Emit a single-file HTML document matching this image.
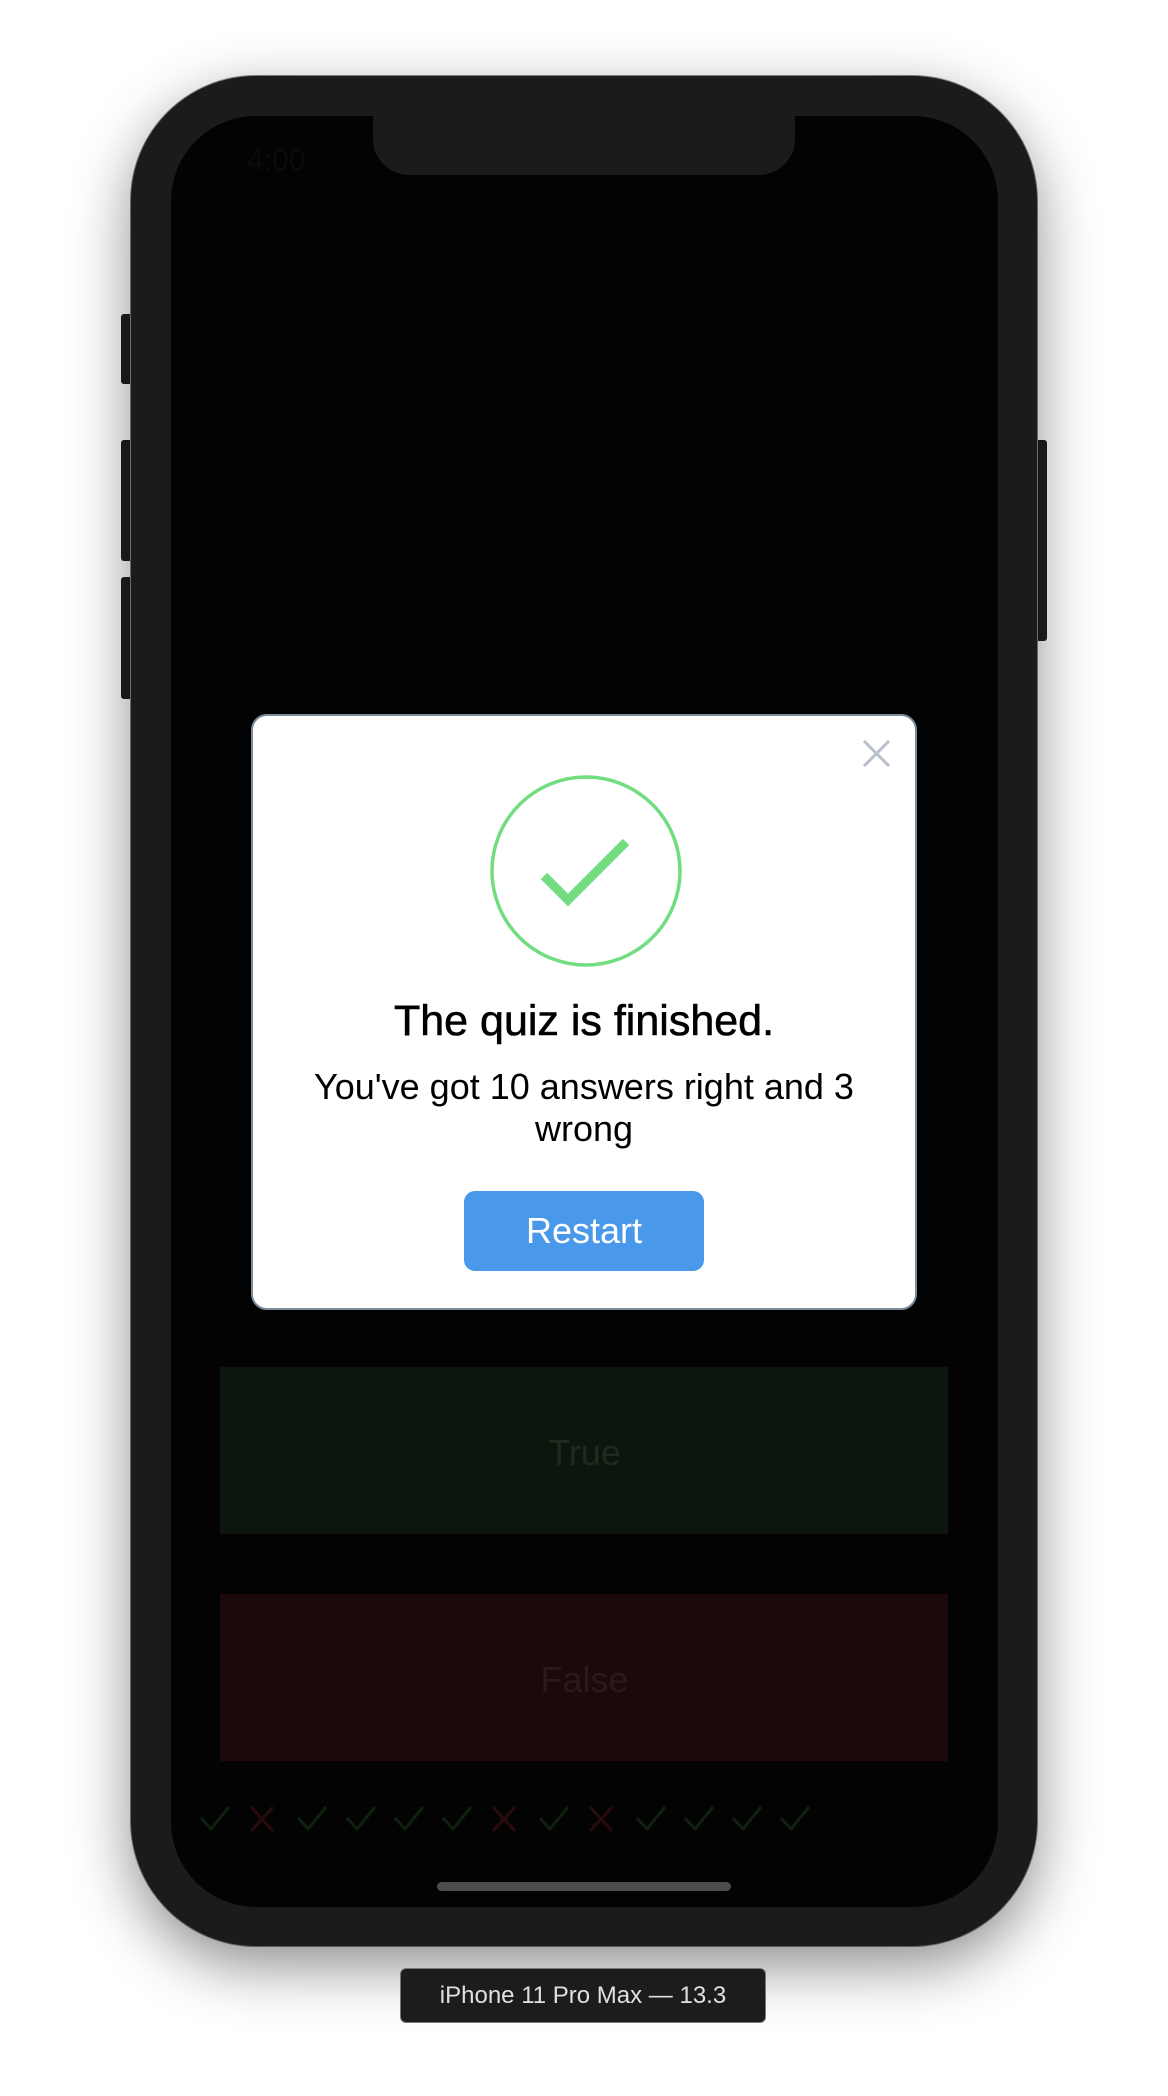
<!DOCTYPE html>
<html><head><meta charset="utf-8"><style>
html,body{margin:0;padding:0;background:#fff;}
body{width:1168px;height:2096px;position:relative;overflow:hidden;font-family:"Liberation Sans",sans-serif;}
.abs{position:absolute;}
.phone{left:131px;top:76px;width:906px;height:1870px;border-radius:125px;background:#1b1b1b;box-shadow:0 20px 60px rgba(0,0,0,0.45),0 0 0 1px #8a8a8a;}
.screen{left:171px;top:116px;width:827px;height:1791px;border-radius:85px;background:#030303;overflow:hidden;}
.notch{left:202px;top:0;width:422px;height:59px;background:#1b1b1b;border-radius:0 0 36px 36px;}
.btn{background:#1f1f1f;border-radius:3px;}
.modal{left:251px;top:714px;width:666px;height:596px;background:#fff;border:2px solid #7d8c99;border-radius:16px;box-sizing:border-box;}
.t{position:absolute;left:0;right:0;text-align:center;}
</style></head><body>
<div class="abs btn" style="left:121px;top:314px;width:12px;height:70px"></div>
<div class="abs btn" style="left:121px;top:440px;width:12px;height:121px"></div>
<div class="abs btn" style="left:121px;top:577px;width:12px;height:122px"></div>
<div class="abs btn" style="left:1035px;top:440px;width:12px;height:201px"></div>
<div class="abs phone"></div>
<div class="abs screen">
  <div class="abs notch"></div>
  <div class="abs" style="left:76px;top:28px;color:#0b0b0b;font-size:30px;">4:00</div>
  <div class="abs" style="left:49px;top:1251px;width:728px;height:167px;background:#0d160d;"></div>
  <div class="t" style="top:1316px;font-size:36px;color:#1e2b1e;">True</div>
  <div class="abs" style="left:49px;top:1478px;width:728px;height:167px;background:#1d0909;"></div>
  <div class="t" style="top:1543px;font-size:36px;color:#2b1a1a;">False</div>
  <svg class="abs" style="left:0;top:1673px" width="827" height="60">
    <g fill="none" stroke-width="3">
      <path stroke="#0f200f" d="M30 29 L40 40 L58 18"/>
      <path stroke="#2a0b0b" d="M80 18 L102 42 M102 18 L80 42"/>
      <path stroke="#0f200f" d="M127 29 L137 40 L155 18"/>
      <path stroke="#0f200f" d="M176 29 L186 40 L204 18"/>
      <path stroke="#0f200f" d="M224 29 L234 40 L252 18"/>
      <path stroke="#0f200f" d="M272 29 L282 40 L300 18"/>
      <path stroke="#2a0b0b" d="M322 18 L344 42 M344 18 L322 42"/>
      <path stroke="#0f200f" d="M369 29 L379 40 L397 18"/>
      <path stroke="#2a0b0b" d="M419 18 L441 42 M441 18 L419 42"/>
      <path stroke="#0f200f" d="M466 29 L476 40 L494 18"/>
      <path stroke="#0f200f" d="M514 29 L524 40 L542 18"/>
      <path stroke="#0f200f" d="M562 29 L572 40 L590 18"/>
      <path stroke="#0f200f" d="M610 29 L620 40 L638 18"/>
    </g>
  </svg>
  <div class="abs" style="left:266px;top:1766px;width:294px;height:9px;border-radius:5px;background:#4d4d4d;"></div>
</div>
<div class="abs modal">
  <svg class="abs" style="left:0;top:0" width="664" height="592">
    <path d="M611 25 L636 50 M636 25 L611 50" stroke="#b7c0c9" stroke-width="3" fill="none"/>
    <circle cx="333" cy="155" r="94" fill="none" stroke="#72dc80" stroke-width="3.5"/>
    <path d="M291 160 L315 184 L373 126" fill="none" stroke="#72dc80" stroke-width="9"/>
  </svg>
  <div class="t" style="top:281px;font-size:43px;color:#000;-webkit-text-stroke:0.6px #000;">The quiz is finished.</div>
  <div class="t" style="top:350px;font-size:36px;line-height:42px;color:#000;padding:0 20px;">You've got 10 answers right and 3<br>wrong</div>
  <div class="abs" style="left:211px;top:475px;width:240px;height:80px;border-radius:11px;background:#4a98ea;color:#fff;font-size:36px;line-height:80px;text-align:center;">Restart</div>
</div>
<div class="abs" style="left:400px;top:1968px;width:366px;height:55px;background:#1c1c1c;border:1px solid #777;border-radius:6px;box-sizing:border-box;color:#e0e0e0;font-size:24px;line-height:53px;text-align:center;">iPhone 11 Pro Max — 13.3</div>
</body></html>
